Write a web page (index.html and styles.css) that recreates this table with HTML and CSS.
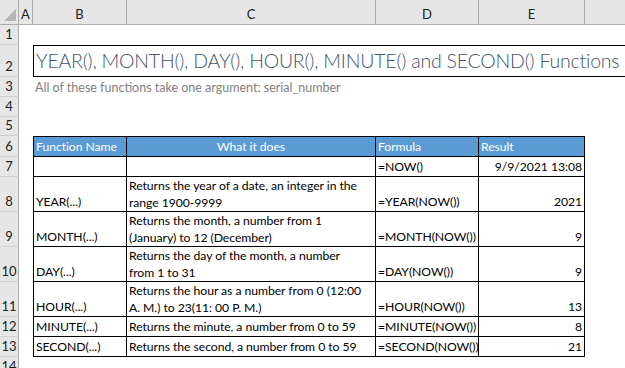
FILE: index.html
```html
<!DOCTYPE html>
<html lang="en">
<head>
    <meta charset="UTF-8">
    <meta name="viewport" content="width=device-width, initial-scale=1.0">
    <title>Date and Time Functions</title>
    <link rel="stylesheet" href="styles.css">
</head>
<body>
    <div class="sheet">
        <!-- column letters -->
        <div class="row head-row">
            <div class="corner">
                <svg width="19" height="25" viewBox="0 0 19 25"><polygon points="4,21 16,21 16,9" fill="#b4b4b4"/></svg>
            </div>
            <div class="col-head">A</div>
            <div class="col-head">B</div>
            <div class="col-head">C</div>
            <div class="col-head">D</div>
            <div class="col-head">E</div>
            <div class="col-head last"></div>
        </div>

        <div class="row h20"><div class="rh">1</div></div>

        <div class="row h32">
            <div class="rh">2</div>
            <div></div>
            <div class="title">YEAR(), MONTH(), DAY(), HOUR(), MINUTE() and SECOND() Functions</div>
        </div>

        <div class="row h20">
            <div class="rh">3</div>
            <div></div>
            <div class="note">All of these functions take one argument: serial_number</div>
        </div>

        <div class="row h20"><div class="rh">4</div></div>
        <div class="row h19"><div class="rh">5</div></div>

        <div class="row h21 thead">
            <div class="rh">6</div>
            <div></div>
            <div class="cell first">Function Name</div>
            <div class="cell center">What it does</div>
            <div class="cell">Formula</div>
            <div class="cell">Result</div>
        </div>

        <div class="row h20">
            <div class="rh">7</div>
            <div></div>
            <div class="cell first"></div>
            <div class="cell"></div>
            <div class="cell">=NOW()</div>
            <div class="cell num">9/9/2021 13:08</div>
        </div>

        <div class="row h35">
            <div class="rh">8</div>
            <div></div>
            <div class="cell first">YEAR(...)</div>
            <div class="cell wrap">Returns the year of a date, an integer in the<br>range 1900-9999</div>
            <div class="cell">=YEAR(NOW())</div>
            <div class="cell num">2021</div>
        </div>

        <div class="row h35">
            <div class="rh">9</div>
            <div></div>
            <div class="cell first">MONTH(...)</div>
            <div class="cell wrap">Returns the month, a number from 1<br>(January) to 12 (December)</div>
            <div class="cell">=MONTH(NOW())</div>
            <div class="cell num">9</div>
        </div>

        <div class="row h35">
            <div class="rh">10</div>
            <div></div>
            <div class="cell first">DAY(...)</div>
            <div class="cell wrap">Returns the day of the month, a number<br>from 1 to 31</div>
            <div class="cell">=DAY(NOW())</div>
            <div class="cell num">9</div>
        </div>

        <div class="row h35">
            <div class="rh">11</div>
            <div></div>
            <div class="cell first">HOUR(...)</div>
            <div class="cell wrap">Returns the hour as a number from 0 (12:00<br>A. M.) to 23(11: 00 P. M.)</div>
            <div class="cell">=HOUR(NOW())</div>
            <div class="cell num">13</div>
        </div>

        <div class="row h20">
            <div class="rh">12</div>
            <div></div>
            <div class="cell first">MINUTE(...)</div>
            <div class="cell">Returns the minute, a number from 0 to 59</div>
            <div class="cell">=MINUTE(NOW())</div>
            <div class="cell num">8</div>
        </div>

        <div class="row h20">
            <div class="rh">13</div>
            <div></div>
            <div class="cell first">SECOND(...)</div>
            <div class="cell">Returns the second, a number from 0 to 59</div>
            <div class="cell">=SECOND(NOW())</div>
            <div class="cell num">21</div>
        </div>

        <div class="row h20"><div class="rh">14</div></div>
    </div>
</body>
</html>
```

FILE: styles.css
```css
:root {
    --cols: 19px 14px 94px 249px 103px 106px 1fr;
    --header-bg: #e6e6e6;
    --header-line: #ababab;
    --row-line: #d0d0d0;
    --blue: #5b9bd5;
    --title: #44546a;
    --text: #000000;
}

* {
    box-sizing: border-box;
}

body {
    margin: 0;
    background: #ffffff;
    font-family: Lato, 'Liberation Sans', sans-serif;
    font-size: 12.2px;
    color: var(--text);
    overflow: hidden;
}

.sheet {
    width: 625px;
    height: 368px;
    overflow: hidden;
}

.row {
    display: grid;
    grid-template-columns: var(--cols);
}

.h19 { height: 19px; }
.h20 { height: 20px; }
.h21 { height: 21px; }
.h32 { height: 32px; }
.h35 { height: 35px; }

/* column and row headers */
.head-row {
    height: 25px;
    background: var(--header-bg);
    border-bottom: 1px solid var(--header-line);
}

.corner {
    border-right: 1px solid var(--header-line);
}

.corner svg {
    display: block;
}

.col-head {
    display: flex;
    align-items: center;
    justify-content: center;
    border-right: 1px solid var(--header-line);
    color: #222;
    font-size: 13px;
    padding-top: 2px;
}

.col-head.last {
    border-right: none;
}

.rh {
    background: var(--header-bg);
    border-right: 1px solid var(--header-line);
    border-bottom: 1px solid var(--row-line);
    display: flex;
    align-items: flex-end;
    justify-content: center;
    padding-bottom: 1px;
    color: #222;
    font-size: 13px;
    line-height: 17px;
}

/* title block */
.title {
    grid-column: 3 / -1;
    border-top: 1px solid #000;
    border-bottom: 1px solid #000;
    border-left: 1px solid #000;
    color: var(--title);
    font-size: 19.5px;
    font-weight: 300;
    letter-spacing: -0.2px;
    white-space: nowrap;
    padding-left: 2px;
    line-height: 30px;
}

.note {
    grid-column: 3 / -1;
    color: #808080;
    font-size: 12.5px;
    white-space: nowrap;
    padding-left: 2px;
    display: flex;
    align-items: center;
}

/* table */
.cell {
    border-right: 1px solid #000;
    border-bottom: 1px solid #000;
    display: flex;
    align-items: flex-end;
    padding: 0 2px 1px 2px;
    line-height: 17px;
    letter-spacing: -0.05px;
    white-space: nowrap;
    overflow: hidden;
}

.cell.first {
    border-left: 1px solid #000;
}

.cell.wrap {
    display: block;
    padding-top: 0;
}

.cell.num {
    justify-content: flex-end;
}

.cell.center {
    justify-content: center;
}

.thead .cell {
    background: var(--blue);
    color: #ffffff;
    border-top: 1px solid #000;
}
```
